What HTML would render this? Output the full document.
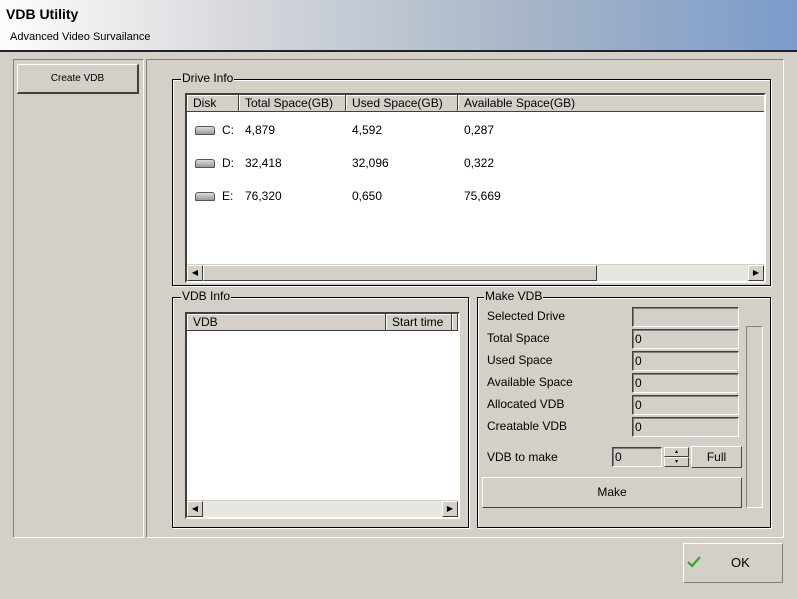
<!DOCTYPE html>
<html><head><meta charset="utf-8"><style>
*{margin:0;padding:0;box-sizing:border-box}
body{width:797px;height:599px;background:#d4d0c8;font-family:"Liberation Sans",sans-serif;font-size:12px;color:#000;position:relative;overflow:hidden}
.a{position:absolute}
.hdr{left:0;top:0;width:797px;height:52px;background:linear-gradient(90deg,#fdfdfd 0%,#d6d8dc 30%,#a9b6c8 65%,#7b9bc9 100%);border-bottom:2px solid #222}
.sunk{border:1px solid;border-color:#808080 #fff #fff #808080}
.raised{border:1px solid;border-color:#fff #404040 #404040 #fff;background:#d4d0c8}
.grp{border:1px solid #000;box-shadow:1px 1px 0 #fff, inset 1px 1px 0 #fff}
.lg{background:#d4d0c8;padding:0 1px;font-size:12px}
.list{background:#fff;border:2px solid;border-color:#404040 #fff #fff #404040}
.th{background:#d4d0c8;border-right:1px solid #404040;border-bottom:1px solid #404040;height:17px;line-height:16px;padding-left:6px;box-shadow:inset 1px 1px 0 #fff}
.fld{width:107px;height:20px;border:1px solid;border-color:#404040 #fff #fff #404040;box-shadow:inset 1px 1px 0 #808080;padding-left:2px;line-height:18px}
.lbl{left:487px}
.drv{width:20px;height:9px;border:1px solid #555;border-radius:3px 3px 1px 1px;background:linear-gradient(#ddd,#999)}
.sb{height:17px;background:#e8e6e0;border-top:1px solid #d4d0c8}
.arr{width:16px;height:16px;font-size:8px;text-align:center;line-height:14px}
</style></head><body>
<div class="a hdr"></div>
<div class="a" style="left:6px;top:6px;font-weight:bold;font-size:14px">VDB Utility</div>
<div class="a" style="left:10px;top:31px;font-size:11px">Advanced Video Survailance</div>

<div class="a sunk" style="left:13px;top:59px;width:131px;height:479px"></div>
<div class="a raised" style="left:17px;top:64px;width:122px;height:30px;border-right:2px solid #404040;border-bottom:2px solid #404040;text-align:center;line-height:28px;font-size:10px">Create VDB</div>
<div class="a sunk" style="left:146px;top:59px;width:638px;height:479px"></div>

<!-- Drive Info -->
<div class="a grp" style="left:172px;top:79px;width:599px;height:207px"></div>
<div class="a lg" style="left:181px;top:71px">Drive Info</div>
<div class="a list" style="left:185px;top:93px;width:581px;height:190px">
 <div class="a" style="left:0;top:0;width:577px;height:17px;background:#d4d0c8;display:flex">
  <div class="th" style="width:52px">Disk</div>
  <div class="th" style="width:107px">Total Space(GB)</div>
  <div class="th" style="width:112px">Used Space(GB)</div>
  <div class="th" style="width:306px;border-right:none">Available Space(GB)</div>
 </div>
 <div class="a drv" style="left:8px;top:31px"></div><div class="a" style="left:35px;top:28px">C:</div><div class="a" style="left:58px;top:28px">4,879</div><div class="a" style="left:165px;top:28px">4,592</div><div class="a" style="left:277px;top:28px">0,287</div>
 <div class="a drv" style="left:8px;top:64px"></div><div class="a" style="left:35px;top:61px">D:</div><div class="a" style="left:58px;top:61px">32,418</div><div class="a" style="left:165px;top:61px">32,096</div><div class="a" style="left:277px;top:61px">0,322</div>
 <div class="a drv" style="left:8px;top:97px"></div><div class="a" style="left:35px;top:94px">E:</div><div class="a" style="left:58px;top:94px">76,320</div><div class="a" style="left:165px;top:94px">0,650</div><div class="a" style="left:277px;top:94px">75,669</div>
 <div class="a sb" style="left:0;top:169px;width:577px">
  <div class="a raised arr" style="left:0;top:0">◀</div>
  <div class="a raised" style="left:16px;top:0;width:394px;height:16px"></div>
  <div class="a raised arr" style="left:561px;top:0">▶</div>
 </div>
</div>

<!-- VDB Info -->
<div class="a grp" style="left:172px;top:297px;width:297px;height:231px"></div>
<div class="a lg" style="left:181px;top:289px">VDB Info</div>
<div class="a list" style="left:185px;top:312px;width:275px;height:207px">
 <div class="a" style="left:0;top:0;width:271px;height:17px;display:flex;background:#d4d0c8">
  <div class="th" style="width:199px">VDB</div>
  <div class="th" style="width:66px">Start time</div>
  <div class="th" style="width:6px;padding:0"></div>
 </div>
 <div class="a sb" style="left:0;top:186px;width:271px">
  <div class="a raised arr" style="left:0;top:0">◀</div>
  <div class="a raised arr" style="left:255px;top:0">▶</div>
 </div>
</div>

<!-- Make VDB -->
<div class="a grp" style="left:477px;top:297px;width:294px;height:231px"></div>
<div class="a lg" style="left:484px;top:289px">Make VDB</div>
<div class="a lbl" style="top:309px">Selected Drive</div><div class="a fld" style="left:632px;top:307px"></div>
<div class="a lbl" style="top:331px">Total Space</div><div class="a fld" style="left:632px;top:329px">0</div>
<div class="a lbl" style="top:353px">Used Space</div><div class="a fld" style="left:632px;top:351px">0</div>
<div class="a lbl" style="top:375px">Available Space</div><div class="a fld" style="left:632px;top:373px">0</div>
<div class="a lbl" style="top:397px">Allocated VDB</div><div class="a fld" style="left:632px;top:395px">0</div>
<div class="a lbl" style="top:419px">Creatable VDB</div><div class="a fld" style="left:632px;top:417px">0</div>
<div class="a" style="left:746px;top:326px;width:17px;height:182px;border:1px solid;border-color:#808080 #fff #fff #808080"></div>
<div class="a lbl" style="top:450px">VDB to make</div>
<div class="a fld" style="left:612px;top:447px;width:50px">0</div>
<div class="a raised" style="left:664px;top:447px;width:25px;height:10px;font-size:6px;text-align:center;line-height:8px">▴</div>
<div class="a raised" style="left:664px;top:457px;width:25px;height:10px;font-size:6px;text-align:center;line-height:8px">▾</div>
<div class="a raised" style="left:691px;top:446px;width:51px;height:22px;text-align:center;line-height:20px">Full</div>
<div class="a raised" style="left:482px;top:477px;width:260px;height:31px;text-align:center;line-height:29px">Make</div>

<!-- OK -->
<div class="a raised" style="left:683px;top:543px;width:100px;height:40px;border-color:#fff #808080 #808080 #fff"></div>
<svg class="a" style="left:686px;top:555px" width="16" height="14"><path d="M2 7 L6 11 L14 2" stroke="#2fa82f" stroke-width="2.2" fill="none"/></svg>
<div class="a" style="left:731px;top:555px;font-size:13px">OK</div>
</body></html>
